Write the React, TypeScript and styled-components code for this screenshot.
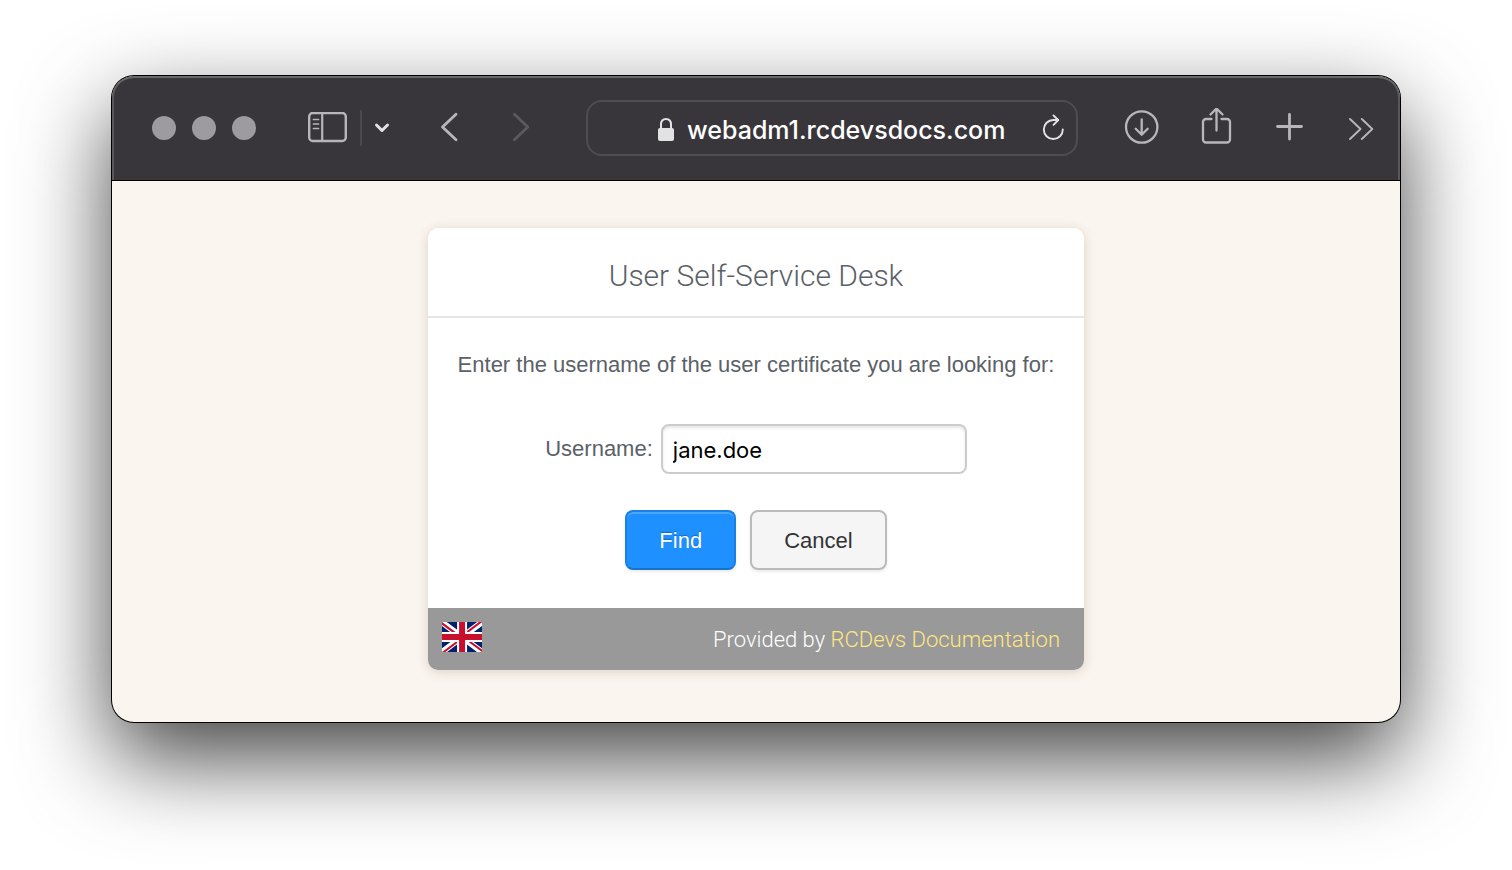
import React, { useState } from "react";
import styled, { createGlobalStyle, css } from "styled-components";

const GlobalStyle = createGlobalStyle`
  *, *::before, *::after { box-sizing: border-box; }
  body {
    margin: 0;
    background: #ffffff;
    font-family: "Liberation Sans", Arial, sans-serif;
    font-size: 22px;
    color: #5b6168;
  }
`;

const Desktop = styled.div`
  padding: 76px 112px 148px;
  overflow: hidden;
`;

const BrowserWindow = styled.div`
  border-radius: 22px;
  overflow: hidden;
  background: #faf5ee;
  box-shadow: 0 0 0 1px #000000, 0 36px 90px rgba(0, 0, 0, 0.74);
`;

const Toolbar = styled.header`
  display: flex;
  align-items: center;
  height: 105px;
  padding: 0 26px 0 40px;
  background: #39363b;
  border-bottom: 1px solid #000000;
  border-radius: 22px 22px 0 0;
  box-shadow: inset 0 2px 0 #69686b, inset 2px 0 0 #59575b, inset -2px 0 0 #59575b;
`;

const WindowControls = styled.div`
  display: flex;
  gap: 16px;
  margin-right: 52px;
`;

const bareButton = css`
  display: block;
  flex: none;
  padding: 0;
  border: 0;
  background: none;
  cursor: pointer;
`;

const WindowDot = styled.button`
  ${bareButton}
  width: 24px;
  height: 24px;
  border-radius: 50%;
  background: #9e9ba0;
`;

const IconButton = styled.button<{ $tone?: string }>`
  ${bareButton}
  color: ${({ $tone }) => $tone ?? "#b8b6ba"};

  svg {
    display: block;
    fill: none;
    stroke: currentColor;
    stroke-linecap: round;
    stroke-linejoin: round;
  }
`;

const SidebarGroup = styled.div`
  display: flex;
  align-items: center;
  gap: 12px;
  margin-right: 50px;
`;

const Divider = styled.span`
  width: 2px;
  height: 36px;
  background: #4b494e;
`;

const HistoryGroup = styled.nav`
  display: flex;
  gap: 54px;
  margin-right: 56px;
`;

const AddressBar = styled.div`
  flex: 1;
  min-width: 0;
  display: grid;
  grid-template-columns: 1fr auto 1fr;
  align-items: center;
  height: 56px;
  padding: 0 10px;
  border: 2px solid #4f4d52;
  border-radius: 16px;
`;

const AddressContent = styled.label`
  grid-column: 2;
  display: flex;
  align-items: center;
  gap: 12px;
`;

const AddressInput = styled.input`
  width: 320px;
  height: 44px;
  padding: 4px 0 0;
  border: 0;
  outline: 0;
  background: transparent;
  color: #ffffff;
  font: 500 25px/40px Inter, Roboto, sans-serif;
`;

const ReloadSlot = styled.div`
  justify-self: end;
`;

const ActionGroup = styled.div`
  display: flex;
  align-items: center;
  gap: 44px;
  margin-left: 46px;
`;

const TransferGroup = styled.div`
  display: flex;
  gap: 40px;
`;

const Page = styled.main`
  padding: 47px 24px 52px;
`;

const Card = styled.section`
  max-width: 656px;
  margin: 0 auto;
  border-radius: 10px;
  overflow: hidden;
  background: #ffffff;
  box-shadow: 0 2px 12px rgba(60, 40, 10, 0.16);
`;

const Title = styled.h1`
  margin: 0;
  padding: 28px 24px 20px;
  border-bottom: 2px solid #e6e6e6;
  font: 300 30px/40px Roboto, "Liberation Sans", sans-serif;
  text-align: center;
`;

const Form = styled.form`
  padding: 32px 24px 38px;
`;

const Prompt = styled.p`
  margin: 0 0 44px;
  line-height: 30px;
  text-align: center;
`;

const Field = styled.div`
  display: flex;
  align-items: center;
  justify-content: center;
  gap: 8px;
  margin-bottom: 36px;
`;

const TextInput = styled.input`
  width: 306px;
  height: 50px;
  padding: 2px 10px 0;
  border: 2px solid #cccccc;
  border-radius: 8px;
  background: #ffffff;
  box-shadow: inset 0 2px 3px rgba(0, 0, 0, 0.1);
  color: #000000;
  font: 400 22px/30px Inter, Roboto, sans-serif;
`;

const Buttons = styled.div`
  display: flex;
  justify-content: center;
  gap: 14px;
`;

const Button = styled.button<{ $primary?: boolean }>`
  height: 60px;
  padding: 2px 32px 0;
  border: 2px solid #bbbbbb;
  border-radius: 8px;
  background: #f5f5f5;
  box-shadow: 0 2px 3px rgba(0, 0, 0, 0.08);
  color: #333333;
  font: 400 22px/30px "Liberation Sans", Arial, sans-serif;
  cursor: pointer;

  ${({ $primary }) =>
    $primary &&
    css`
      border-color: #1b80e4 #1b80e4 #1873cc;
      background: #1e90ff;
      box-shadow: inset 0 2px 0 #4aa6ff, 0 2px 3px rgba(0, 0, 0, 0.08);
      color: #ffffff;
      text-shadow: 0 -1px 1px rgba(0, 0, 0, 0.3);
    `}
`;

const CardFooter = styled.footer`
  display: flex;
  align-items: center;
  justify-content: space-between;
  height: 62px;
  padding: 0 24px 0 14px;
  background: #999999;
  color: #ffffff;
`;

const LanguageButton = styled.button`
  ${bareButton}
  padding-bottom: 4px;

  svg { display: block; }
`;

const Credit = styled.span`
  padding-top: 2px;
  font: 300 22px/30px Roboto, "Liberation Sans", sans-serif;
`;

const CreditLink = styled.a`
  color: #ffe680;
  text-decoration: none;
`;

const UnionJack = () => (
  <svg width="40" height="30" viewBox="0 0 640 480" aria-hidden="true">
    <path fill="#012169" d="M0 0h640v480H0z" />
    <path fill="#fff" d="m75 0 244 181L562 0h78v62L400 241l240 178v61h-80L320 301 81 480H0v-60l239-178L0 64V0z" />
    <path fill="#c8102e" d="m424 281 216 159v40L369 281zm-184 20 6 35L54 480H0zM640 0v3L391 191l2-44L590 0zM0 0l239 176h-60L0 42z" />
    <path fill="#fff" d="M241 0v480h160V0zM0 160v160h640V160z" />
    <path fill="#c8102e" d="M0 193v96h640v-96zM273 0v480h96V0z" />
  </svg>
);

export default function App() {
  const [address, setAddress] = useState("webadm1.rcdevsdocs.com");
  const [username, setUsername] = useState("jane.doe");

  return (
    <>
      <GlobalStyle />
      <Desktop>
        <BrowserWindow>
          <Toolbar>
            <WindowControls>
              <WindowDot type="button" aria-label="Close" />
              <WindowDot type="button" aria-label="Minimize" />
              <WindowDot type="button" aria-label="Zoom" />
            </WindowControls>
            <SidebarGroup>
              <IconButton type="button" aria-label="Sidebar">
                <svg width="40" height="32" viewBox="0 0 40 32">
                  <rect x="1.2" y="1" width="36.6" height="28" rx="3.5" strokeWidth="2.4" />
                  <path d="M14.2 1v28" strokeWidth="2.2" />
                  <path d="M5.5 7.5h5M5.5 12h5M5.5 16.5h5" strokeWidth="1.7" />
                </svg>
              </IconButton>
              <Divider />
              <IconButton type="button" aria-label="Tab groups" $tone="#e2e1e3">
                <svg width="16" height="16" viewBox="0 0 16 16">
                  <path d="M2.5 5l5.5 5.5L13.5 5" strokeWidth="3" />
                </svg>
              </IconButton>
            </SidebarGroup>
            <HistoryGroup aria-label="History">
              <IconButton type="button" aria-label="Back">
                <svg width="18" height="32" viewBox="0 0 18 32">
                  <path d="M16 2.2L2.5 15 16 27.8" strokeWidth="2.8" />
                </svg>
              </IconButton>
              <IconButton type="button" aria-label="Forward" $tone="#5b595e">
                <svg width="18" height="32" viewBox="0 0 18 32">
                  <path d="M2.4 2.2L15.8 15 2.4 27.8" strokeWidth="2.8" />
                </svg>
              </IconButton>
            </HistoryGroup>
            <AddressBar>
              <AddressContent>
                <svg width="18" height="28" viewBox="0 0 18 28" aria-hidden="true">
                  <rect x="1" y="14" width="16" height="13" rx="2" fill="#e2e1e3" />
                  <path d="M4 15v-4.500C4 7 6 5 9 5s5 2 5 5.500V15" fill="none" stroke="#e2e1e3" strokeWidth="2" />
                </svg>
                <AddressInput
                  aria-label="Address"
                  value={address}
                  onChange={(event) => setAddress(event.target.value)}
                />
              </AddressContent>
              <ReloadSlot>
                <IconButton type="button" aria-label="Reload" $tone="#e2e1e3">
                  <svg width="24" height="28" viewBox="0 0 24 28">
                    <path d="M20.800 15.500A9.500 9.500 0 1 1 11.300 6H16" strokeWidth="1.9" />
                    <path d="M11.500 1.500L16.300 6l-4.800 4.800" strokeWidth="1.9" />
                  </svg>
                </IconButton>
              </ReloadSlot>
            </AddressBar>
            <ActionGroup>
              <TransferGroup>
                <IconButton type="button" aria-label="Downloads">
                  <svg width="36" height="40" viewBox="0 0 36 40">
                    <circle cx="17.7" cy="19" r="15.700" strokeWidth="2.3" />
                    <path d="M17.700 11.500v15M11.700 20.800l6 5.900 6-5.900" strokeWidth="2.300" />
                  </svg>
                </IconButton>
                <IconButton type="button" aria-label="Share">
                  <svg width="32" height="40" viewBox="0 0 32 40">
                    <path
                      d="M11.500 11H6a3 3 0 0 0-3 3V31.500a3 3 0 0 0 3 3H27a3 3 0 0 0 3-3V14a3 3 0 0 0-3-3H21.500"
                      strokeWidth="2.300"
                    />
                    <path d="M16.500 22.500V1M10.500 6.500l6-6 6 6" strokeWidth="2.300" />
                  </svg>
                </IconButton>
              </TransferGroup>
              <IconButton type="button" aria-label="New tab">
                <svg width="28" height="32" viewBox="0 0 28 32">
                  <path d="M13.500 2.500v24.500M1.500 14.500h24" strokeWidth="2.800" />
                </svg>
              </IconButton>
              <IconButton type="button" aria-label="More">
                <svg width="26" height="24" viewBox="0 0 26 24">
                  <path d="M2 3l10.500 10L2 23M13.800 3l10.500 10-10.500 10" strokeWidth="1.900" />
                </svg>
              </IconButton>
            </ActionGroup>
          </Toolbar>
          <Page>
            <Card>
              <Title>User Self-Service Desk</Title>
              <Form onSubmit={(event) => event.preventDefault()}>
                <Prompt>Enter the username of the user certificate you are looking for:</Prompt>
                <Field>
                  <label htmlFor="username">Username:</label>
                  <TextInput
                    id="username"
                    value={username}
                    onChange={(event) => setUsername(event.target.value)}
                  />
                </Field>
                <Buttons>
                  <Button type="submit" $primary>Find</Button>
                  <Button type="button">Cancel</Button>
                </Buttons>
              </Form>
              <CardFooter>
                <LanguageButton type="button" aria-label="English">
                  <UnionJack />
                </LanguageButton>
                <Credit>
                  Provided by <CreditLink href="#">RCDevs Documentation</CreditLink>
                </Credit>
              </CardFooter>
            </Card>
          </Page>
        </BrowserWindow>
      </Desktop>
    </>
  );
}
